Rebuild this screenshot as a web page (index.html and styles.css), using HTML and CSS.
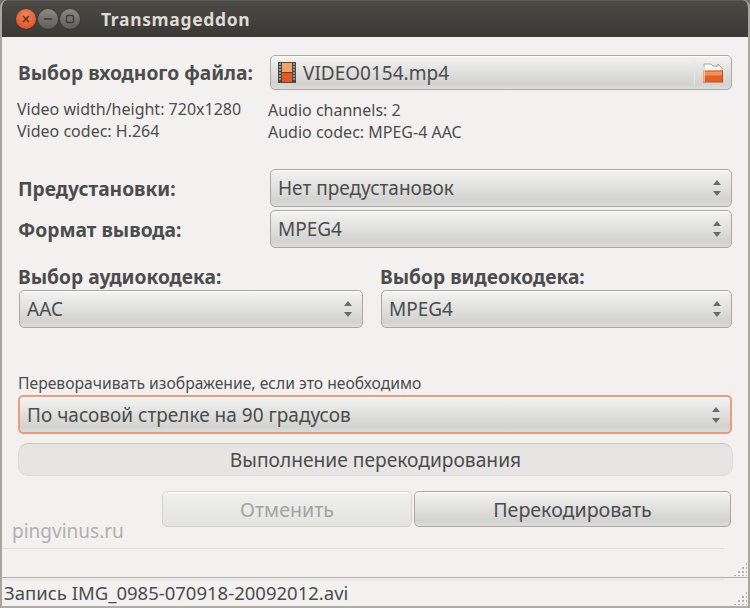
FILE: index.html
```html
<!DOCTYPE html>
<html lang="ru">
<head>
<meta charset="utf-8">
<title>Transmageddon</title>
<link rel="stylesheet" href="styles.css">
</head>
<body>
<div class="window">
  <header class="titlebar">
    <div class="controls">
      <span class="ctl close"><svg viewBox="0 0 10 10" width="10" height="10"><path d="M2 2l6 6M8 2l-6 6" stroke="#6b2a12" stroke-width="1.5" fill="none"/></svg></span>
      <span class="ctl"><svg viewBox="0 0 10 10" width="10" height="10"><path d="M1 5h8" stroke="#3a3a36" stroke-width="1.4" fill="none"/></svg></span>
      <span class="ctl"><svg viewBox="0 0 10 10" width="10" height="10"><rect x="1.5" y="1.5" width="7" height="7" rx="1" stroke="#3a3a36" stroke-width="1.3" fill="none"/></svg></span>
    </div>
    <div class="title">Transmageddon</div>
  </header>
  <main class="content">
    <div class="row-file">
      <label class="bold">Выбор входного файла:</label>
      <div class="btn combo file">
        <svg class="film" viewBox="0 0 18 21" width="18" height="21">
          <rect width="18" height="21" fill="#4a4a46"/>
          <rect x="4" y="1" width="10" height="9" fill="#f2a566"/>
          <rect x="4" y="11" width="10" height="9" fill="#e9591f"/>
          <path d="M1 2h2M1 5h2M1 8h2M1 11h2M1 14h2M1 17h2M15 2h2M15 5h2M15 8h2M15 11h2M15 14h2M15 17h2" stroke="#d8d8d4" stroke-width="1.2"/>
        </svg>
        <span class="val">VIDEO0154.mp4</span>
        <span class="divider"></span>
        <svg class="folder" viewBox="0 0 22 20" width="22" height="20">
          <path d="M2 1h7l2 2h5V1l4 4v5H2z" fill="#f8f7f4" stroke="#a8a69f" stroke-width="1"/>
          <rect x="1.5" y="8" width="19" height="11" fill="#e75f22" stroke="#bf4a1c"/>
          <rect x="2" y="8.5" width="18" height="4" fill="#f39257"/>
          <path d="M2 4v15" stroke="#fff" stroke-width="1"/>
        </svg>
      </div>
    </div>
    <div class="info">
      <div class="info-left">Video width/height: 720x1280<br>Video codec: H.264</div>
      <div class="info-right">Audio channels: 2<br>Audio codec: MPEG-4 AAC</div>
    </div>
    <div class="row-select first">
      <label class="bold">Предустановки:</label>
      <div class="btn combo"><span class="val">Нет предустановок</span><span class="arrows"></span></div>
    </div>
    <div class="row-select second">
      <label class="bold">Формат вывода:</label>
      <div class="btn combo"><span class="val">MPEG4</span><span class="arrows"></span></div>
    </div>
    <div class="codecs">
      <div class="codec audio">
        <label class="bold">Выбор аудиокодека:</label>
        <div class="btn combo small"><span class="val">AAC</span><span class="arrows"></span></div>
      </div>
      <div class="codec video">
        <label class="bold">Выбор видеокодека:</label>
        <div class="btn combo small"><span class="val">MPEG4</span><span class="arrows"></span></div>
      </div>
    </div>
    <div class="rotate-label">Переворачивать изображение, если это необходимо</div>
    <div class="btn combo focus"><span class="val">По часовой стрелке на 90 градусов</span><span class="arrows"></span></div>
    <div class="progress">Выполнение перекодирования</div>
    <div class="actions">
      <div class="btn action disabled">Отменить</div>
      <div class="btn action">Перекодировать</div>
    </div>
  </main>
  <div class="watermark">pingvinus.ru</div>
  <div class="sep-area"><span class="grip"></span></div>
  <footer class="status">Запись IMG_0985-070918-20092012.avi<span class="grip"></span></footer>
</div>
</body>
</html>
```
FILE: styles.css
```css
* { box-sizing: border-box; }
html, body { margin: 0; height: 100%; }
body { background: #6e6d68; font-family: "Noto Sans", sans-serif; color: #4c4c4c; overflow: hidden; }
.window { position: relative; width: 750px; height: 608px; background: #f2f1f0; display: flex; flex-direction: column; border-radius: 7px 7px 0 0; overflow: hidden; border-left: 2px solid #a8a6a0; border-right: 2px solid #a8a6a0; }
.titlebar { height: 37px; margin: 0 -2px; flex: none; background: linear-gradient(#4b4a45, #3a3935); display: flex; align-items: center; padding-left: 16px; border-top: 1px solid #5c5b55; }
.controls { display: flex; gap: 2px; }
.ctl { width: 20px; height: 20px; border-radius: 50%; background: linear-gradient(#8a8983, #5e5d58); display: flex; align-items: center; justify-content: center; box-shadow: 0 0 1px #222; }
.ctl.close { background: radial-gradient(circle at 50% 30%, #f2835a, #d9471b); }
.title { margin-left: 21px; font-size: 17.5px; font-weight: 700; color: #dfdbd2; letter-spacing: 0.65px; }
.content { flex: none; height: 505px; padding: 18px 0 0 16px; display: flex; flex-direction: column; }
.bold { font-weight: 700; font-size: 19.2px; color: #4c4c4c; white-space: nowrap; }
.btn { border: 1px solid #a9a8a3; border-radius: 5px; background: linear-gradient(#f3f3f2, #d2d2d0 85%, #dcdcda); box-shadow: inset 0 1px 0 #fff; font-size: 19px; color: #4c4c4c; display: flex; align-items: center; }
.combo { padding: 0 9px 0 7px; position: relative; }
.val { flex: 1; white-space: nowrap; }
.row-file { display: grid; grid-template-columns: 252px 462px; align-items: center; height: 35px; }
.file { height: 35px; padding-left: 7px; gap: 7px; }
.film { flex: none; }
.divider { width: 1px; height: 24px; background: #e6e5e3; flex: none; }
.folder { flex: none; margin-left: 0; margin-right: -2px; }
.info { display: grid; grid-template-columns: 250px 1fr; font-size: 16px; line-height: 21.5px; margin-top: 9px; height: 44px; color: #4c4c4c; }
.info-left { margin-left: -1px; }
.info-right { padding-top: 1px; }
.row-select { display: grid; grid-template-columns: 252px 462px; align-items: center; }
.row-select.first { margin-top: 26px; }
.row-select.second { margin-top: 3px; }
.row-select .btn { height: 38px; }
.arrows { flex: none; width: 8px; height: 16px; position: relative; margin-right: 1px; }
.arrows::before, .arrows::after { content: ""; position: absolute; left: 0; border-left: 4px solid transparent; border-right: 4px solid transparent; }
.arrows::before { top: 0; border-bottom: 5px solid #6a6a68; }
.arrows::after { bottom: 0; border-top: 5px solid #6a6a68; }
.codecs { display: grid; grid-template-columns: 344px 351px; column-gap: 18px; margin-top: 18px; margin-left: 1px; width: 713px; }
.codec .bold { display: block; height: 24px; line-height: 22px; margin-left: -1px; }
.small { height: 38px; }
.rotate-label { margin-top: 45px; font-size: 15.7px; height: 22px; line-height: 20px; }
.focus { width: 714px; height: 39px; border: 2px solid #f09a77; }
.progress { width: 715px; height: 33px; margin-top: 9px; background: #e6e5e3; border: 1px solid #dcdbd8; border-top-color: #c9c8c3; border-radius: 10px; display: flex; align-items: center; justify-content: center; font-size: 19.2px; color: #4c4c4c; }
.actions { display: grid; grid-template-columns: 250px 317px; column-gap: 2px; margin: 15px 0 0 144px; }
.action { height: 36px; justify-content: center; font-size: 19.6px; }
.disabled { color: #a3a3a1; background: linear-gradient(#f0f0ee, #e3e3e1); border-color: #d2d1ce; }
.watermark { position: absolute; left: 10px; top: 518px; font-size: 19px; color: #b0b0b0; }
.sep-area { flex: 1; position: relative; margin-left: -2px; margin-right: -2px; }
.sep-area::before { content: ""; position: absolute; left: 0; width: 724px; top: 6px; height: 1px; background: #e0dfdc; }
.status { height: 31px; flex: none; margin: 0 -2px; padding-left: 4px; border-top: 1px solid #aeada8; border-bottom: 2px solid #aeada8; font-size: 18.5px; line-height: 30px; color: #4c4c4c; position: relative; }
.status::before { content: ""; position: absolute; left: 0; width: 724px; top: 1px; height: 1px; background: #e0dfdc; }
.grip { position: absolute; right: 3px; bottom: 1px; width: 14px; height: 14px; background-image: radial-gradient(circle, #b0afa9 0.8px, transparent 1px); background-size: 4px 4px; clip-path: polygon(100% 0, 100% 100%, 0 100%); }
```
